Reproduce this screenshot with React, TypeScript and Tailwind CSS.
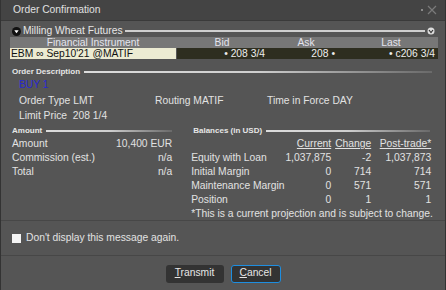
import React from 'react';

const font = { fontFamily: '"Liberation Sans", Arial, sans-serif' };

const GroupTitle: React.FC<{ label: string; className?: string }> = ({ label, className }) => (
  <div className={`h-[8px] flex items-center gap-[4px] ${className || ''}`}>
    <span className="text-[8px] font-bold text-[#e6e6e6] whitespace-nowrap leading-none">{label}</span>
    <div className="flex-grow h-[2px] bg-gradient-to-r from-[#dcdcdc] via-[#cfcfcf] to-[#6a6a6a]" />
  </div>
);

const balances = [
  { label: 'Equity with Loan', cur: '1,037,875', chg: '-2', post: '1,037,873' },
  { label: 'Initial Margin', cur: '0', chg: '714', post: '714' },
  { label: 'Maintenance Margin', cur: '0', chg: '571', post: '571' },
  { label: 'Position', cur: '0', chg: '1', post: '1' },
];

export default function App() {
  return (
    <div style={font} className="w-[446px] h-[290px] bg-[#555555] border-x border-[#333] flex flex-col text-[10.3px] text-[#e2e2e2] overflow-hidden">
      {/* Title bar */}
      <div className="h-[21px] flex-shrink-0 bg-[#444444] border-b border-[#3a3a3a] flex items-center justify-between pl-[12px] pr-[8px]">
        <span className="text-[#e0e0e0]">Order Confirmation</span>
        <div className="flex items-center gap-[4px]">
          <div className="w-[2px] h-[2px] bg-[#8a8a8a]" />
          <svg width="10" height="10" viewBox="0 0 10 10">
            <path d="M1 1 L9 9 M9 1 L1 9" stroke="#7a7a7a" strokeWidth="1.2" />
          </svg>
        </div>
      </div>

      <div className="h-[199px] flex-shrink-0 flex flex-col px-[9px] overflow-hidden">
        {/* Milling Wheat Futures */}
        <div className="mt-[5px] h-[11px] flex items-center gap-[2px] pl-[2px] pr-[1px]">
          <svg width="9" height="9" viewBox="0 0 9 9" className="flex-shrink-0">
            <circle cx="4.5" cy="4.5" r="4.5" fill="#111" />
            <path d="M2.3 3.2 L6.7 3.2 L4.5 6.2 Z" fill="#fff" />
          </svg>
          <span className="text-[#e6e6e6] whitespace-nowrap leading-none">Milling Wheat Futures</span>
          <div className="flex-grow h-[2px] bg-[#cfcfcf]" />
          <svg width="8" height="8" viewBox="0 0 8 8" className="flex-shrink-0">
            <circle cx="4" cy="4" r="3.5" fill="#ddd" />
            <path d="M2 3 L4 5.5 L6 3" stroke="#333" strokeWidth="1.2" fill="none" />
          </svg>
        </div>

        <div className="mt-[1px] grid grid-cols-[166px_92px_76px_94px] leading-[11px]">
          <div className="h-[11px] bg-[#777777] text-[#e4e4ee] text-center">Financial Instrument</div>
          <div className="h-[11px] bg-[#777777] text-[#e4e4ee] text-center">Bid</div>
          <div className="h-[11px] bg-[#777777] text-[#e4e4ee] text-center">Ask</div>
          <div className="h-[11px] bg-[#777777] text-[#e4e4ee] text-center">Last</div>
          <div className="h-[11px] bg-[#ecebd2] text-[#111] pl-[1px] whitespace-nowrap">EBM ∞ Sep10'21 @MATIF</div>
          <div className="h-[11px] bg-[#2e2e20] text-[#eee] text-right pr-[3px] border-l border-[#555]">• 208 3/4</div>
          <div className="h-[11px] bg-[#2e2e20] text-[#eee] text-right pr-[9px]">208 •</div>
          <div className="h-[11px] bg-[#2e2e20] text-[#eee] text-right pr-[3px]">• c206 3/4</div>
        </div>

        {/* Order Description */}
        <GroupTitle label="Order Description" className="mt-[9px] pl-[2px] pr-[4px]" />
        <div className="pl-[9px] leading-[14px]">
          <div className="mt-[2px] text-[#2828d0]">BUY 1</div>
          <div className="mt-[2px] grid grid-cols-[136px_112px_auto]">
            <span>Order Type LMT</span>
            <span>Routing MATIF</span>
            <span>Time in Force DAY</span>
          </div>
          <div className="mt-[1px]">Limit Price&nbsp;&nbsp;208 1/4</div>
        </div>

        {/* Amount / Balances */}
        <div className="mt-[4px] flex leading-[14px]">
          <div className="w-[163px] flex flex-col pl-[2px]">
            <GroupTitle label="Amount" />
            <div className="mt-[2px] flex flex-col">
              {[
                ['Amount', '10,400 EUR'],
                ['Commission (est.)', 'n/a'],
                ['Total', 'n/a'],
              ].map(([l, v]) => (
                <div key={l} className="flex justify-between">
                  <span>{l}</span>
                  <span>{v}</span>
                </div>
              ))}
            </div>
          </div>
          <div className="ml-[19px] w-[246px] flex flex-col">
            <GroupTitle label="Balances (in USD)" className="pl-[2px] pr-[6px]" />
            <div className="mt-[2px] grid grid-cols-[92px_48px_40px_60px] text-right">
              <span />
              <span className="underline">Current</span>
              <span className="underline">Change</span>
              <span className="underline">Post-trade*</span>
              {balances.map(b => (
                <React.Fragment key={b.label}>
                  <span className="text-left whitespace-nowrap">{b.label}</span>
                  <span>{b.cur}</span>
                  <span>{b.chg}</span>
                  <span>{b.post}</span>
                </React.Fragment>
              ))}
            </div>
            <div className="whitespace-nowrap">*This is a current projection and is subject to change.</div>
          </div>
        </div>
      </div>

      {/* Checkbox */}
      <div className="h-[35px] flex-shrink-0 border-t border-[#474747] flex items-center pl-[11px] gap-[5px]">
        <div className="w-[9px] h-[9px] bg-[#f4f4f4]" />
        <span>Don't display this message again.</span>
      </div>

      {/* Buttons */}
      <div className="h-[35px] flex-shrink-0 border-t border-[#474747] flex items-center justify-center gap-[7px] pt-[1px]">
        <button className="w-[58px] h-[18px] bg-[#333333] rounded-[3px] text-[#e6e6e6] leading-none">
          <span className="underline">T</span>ransmit
        </button>
        <button className="w-[50px] h-[18px] bg-[#333333] rounded-[3px] border border-[#1e8ee0] text-[#e6e6e6] leading-none">
          <span className="underline">C</span>ancel
        </button>
      </div>
    </div>
  );
}
